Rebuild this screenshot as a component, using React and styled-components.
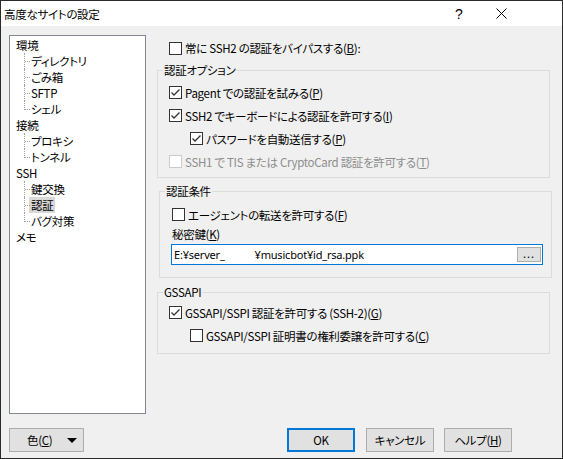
import React from 'react'
import styled, { createGlobalStyle } from 'styled-components'

const GlobalStyle = createGlobalStyle`
*{
  margin: 0;
  padding: 0;
  box-sizing: border-box;
}
body{
  font-family: "Noto Sans CJK JP", "Noto Sans", sans-serif;
  font-size: 11.5px;
  letter-spacing: -0.3px;
  font-feature-settings: "palt";
  color: #000;
  background: #fff;
}
`

const Window = styled.div`
width: 563px;
height: 459px;
border: 1px solid #2b2b2b;
display: flex;
flex-direction: column;
background: #f0f0f0;
`

const TitleBar = styled.div`
height: 25px;
background: #fff;
display: flex;
align-items: center;
padding: 0 40px 0 3px;
`

const Title = styled.div`
flex: 1;
font-size: 11.5px;
line-height: 16px;
`

const TitleBtn = styled.div`
width: 42px;
height: 25px;
display: flex;
align-items: center;
justify-content: center;
font-family: "Liberation Sans", sans-serif;
font-size: 14px;
letter-spacing: 0;
`

const Body = styled.div`
flex: 1;
padding: 9px 10px 6px 8px;
display: flex;
flex-direction: column;
`

const Main = styled.div`
display: flex;
gap: 11px;
height: 379px;
`

const Tree = styled.div`
flex: none;
width: 137px;
height: 379px;
background: #fff;
border: 1px solid #828790;
padding-top: 1px;
`

const TreeRoot = styled.div`
height: 16px;
line-height: 16px;
padding-left: 6px;
white-space: nowrap;
`

const TreeChildren = styled.div`
`

const TreeChild = styled.div`
position: relative;
height: 16px;
line-height: 16px;
padding-left: 19px;
white-space: nowrap;
&::before{
  content: '';
  position: absolute;
  left: 14px;
  top: 0;
  height: ${p => p.$last ? '9px' : '16px'};
  border-left: 1px dotted #a0a0a0;
}
&::after{
  content: '';
  position: absolute;
  left: 15px;
  top: 8px;
  width: 5px;
  border-top: 1px dotted #a0a0a0;
}
`

const TreeLabel = styled.span`
display: inline-block;
padding: 0 2px;
background: ${p => p.$selected ? '#d9d9d9' : 'transparent'};
`

const Panel = styled.div`
flex: none;
width: 395px;
display: flex;
flex-direction: column;
`

const Row = styled.label`
display: flex;
align-items: center;
height: ${p => p.$h || 23}px;
padding-left: ${p => p.$indent || 0}px;
color: ${p => p.$disabled ? '#8d8d8d' : '#000'};
white-space: pre;
`

const TopRow = styled(Row)`
margin-top: 5px;
padding-left: 12px;
`

const Box = styled.span`
width: 13px;
height: 13px;
flex: none;
margin-right: 3px;
border: 1px solid ${p => p.$disabled ? '#cccccc' : '#333333'};
background: #fff;
display: flex;
align-items: center;
justify-content: center;
`

const Key = styled.span`
text-decoration: underline;
text-underline-offset: 1px;
`

const Group = styled.fieldset`
border: 1px solid #dcdcdc;
margin: ${p => p.$mt}px 0 0 ${p => p.$ml || 0}px;
width: 393px;
padding: 0 ${p => p.$pr || 0}px ${p => p.$pb}px ${p => p.$pl || 11}px;
min-width: 0;
`

const Legend = styled.legend`
margin-left: ${p => p.$ml || -6}px;
padding: 0 1px;
line-height: 16px;
`

const Inner = styled.div`
padding-top: ${p => p.$pt || 0}px;
display: flex;
flex-direction: column;
`

const FieldLabel = styled.div`
height: 16px;
line-height: 16px;
padding-left: 1px;
`

const PathBox = styled.div`
margin-top: 2px;
height: 21px;
border: 1px solid #0078d7;
background: #fff;
display: flex;
align-items: center;
padding: 0 1px 0 2px;
`

const PathText = styled.div`
flex: 1;
white-space: nowrap;
font-family: "Noto Sans", "Noto Sans CJK JP", sans-serif;
font-size: 11px;
letter-spacing: -0.2px;
line-height: 16px;
`

const Gap = styled.span`
display: inline-block;
width: 30px;
`

const BrowseBtn = styled.div`
width: 24px;
height: 15px;
background: #e1e1e1;
border: 1px solid #adadad;
font-size: 11px;
line-height: 11px;
text-align: center;
letter-spacing: 1px;
`

const Footer = styled.div`
margin-top: 14px;
padding-right: 40px;
display: flex;
align-items: center;
`

const Button = styled.button`
flex: none;
width: ${p => p.$w || 68}px;
height: 24px;
margin-right: ${p => p.$mr || 0}px;
background: #e1e1e1;
border: ${p => p.$primary ? '2px solid #0078d7' : '1px solid #adadad'};
font-family: inherit;
font-size: 11.5px;
letter-spacing: -0.3px;
font-feature-settings: "palt";
color: #000;
display: flex;
align-items: center;
justify-content: center;
`

const ColorBtn = styled(Button)`
justify-content: space-between;
padding: 0 6px 0 17px;
`

const Arrow = styled.span`
width: 0;
height: 0;
border-left: 5px solid transparent;
border-right: 5px solid transparent;
border-top: 5px solid #000;
`

const Spacer = styled.div`
flex: 1;
`

const Check = ({ checked, disabled }) => (
  <Box $disabled={disabled}>
    {checked && (
      <svg width="11" height="11" viewBox="0 0 11 11">
        <path d="M1.5 5.5 L4 8 L9.5 2.5" fill="none" stroke="#333" strokeWidth="1.3" />
      </svg>
    )}
  </Box>
)

const tree = [
  { label: '環境', children: ['ディレクトリ', 'ごみ箱', 'SFTP', 'シェル'] },
  { label: '接続', children: ['プロキシ', 'トンネル'] },
  { label: 'SSH', children: ['鍵交換', '認証', 'バグ対策'] },
  { label: 'メモ', children: [] },
]

export default class App extends React.Component {
  render() {
    return (
      <Window>
        <GlobalStyle />
        <TitleBar>
          <Title>高度なサイトの設定</Title>
          <TitleBtn>?</TitleBtn>
          <TitleBtn>
            <svg width="11" height="11" viewBox="0 0 11 11">
              <path d="M0.5 0.5 L10.5 10.5 M10.5 0.5 L0.5 10.5" stroke="#000" strokeWidth="1" />
            </svg>
          </TitleBtn>
        </TitleBar>

        <Body>
          <Main>
            <Tree>
              {tree.map(node => (
                <div key={node.label}>
                  <TreeRoot>{node.label}</TreeRoot>
                  <TreeChildren>
                    {node.children.map((c, i) => (
                      <TreeChild key={c} $last={i === node.children.length - 1}>
                        <TreeLabel $selected={c === '認証'}>{c}</TreeLabel>
                      </TreeChild>
                    ))}
                  </TreeChildren>
                </div>
              ))}
            </Tree>

            <Panel>
              <TopRow $h={16}>
                <Check />
                常に SSH2 の認証をバイパスする(<Key>B</Key>):
              </TopRow>

              <Group $mt={6} $pb={4}>
                <Legend>認証オプション</Legend>
                <Inner $pt={3}>
                  <Row><Check checked />Pagent での認証を試みる(<Key>P</Key>)</Row>
                  <Row><Check checked />SSH2 でキーボードによる認証を許可する(<Key>I</Key>)</Row>
                  <Row $indent={21}><Check checked />パスワードを自動送信する(<Key>P</Key>)</Row>
                  <Row $disabled><Check disabled />SSH1 で TIS または CryptoCard 認証を許可する(<Key>T</Key>)</Row>
                </Inner>
              </Group>

              <Group $mt={5} $ml={2} $pb={12} $pr={8}>
                <Legend>認証条件</Legend>
                <Inner $pt={4}>
                  <Row $indent={1}><Check />エージェントの転送を許可する(<Key>F</Key>)</Row>
                  <FieldLabel>秘密鍵(<Key>K</Key>)</FieldLabel>
                  <PathBox>
                    <PathText>E:¥server_<Gap />¥musicbot¥id_rsa.ppk</PathText>
                    <BrowseBtn>...</BrowseBtn>
                  </PathBox>
                </Inner>
              </Group>

              <Group $mt={6} $pb={6}>
                <Legend>GSSAPI</Legend>
                <Inner $pt={1}>
                  <Row><Check checked />GSSAPI/SSPI 認証を許可する (SSH-2)(<Key>G</Key>)</Row>
                  <Row $indent={21}><Check />GSSAPI/SSPI 証明書の権利委譲を許可する(<Key>C</Key>)</Row>
                </Inner>
              </Group>
            </Panel>
          </Main>

          <Footer>
            <ColorBtn $w={75}>
              <span>色(<Key>C</Key>)</span>
              <Arrow />
            </ColorBtn>
            <Spacer />
            <Button $primary $mr={11}>OK</Button>
            <Button $mr={10}>キャンセル</Button>
            <Button>ヘルプ(<Key>H</Key>)</Button>
          </Footer>
        </Body>
      </Window>
    )
  }
}
